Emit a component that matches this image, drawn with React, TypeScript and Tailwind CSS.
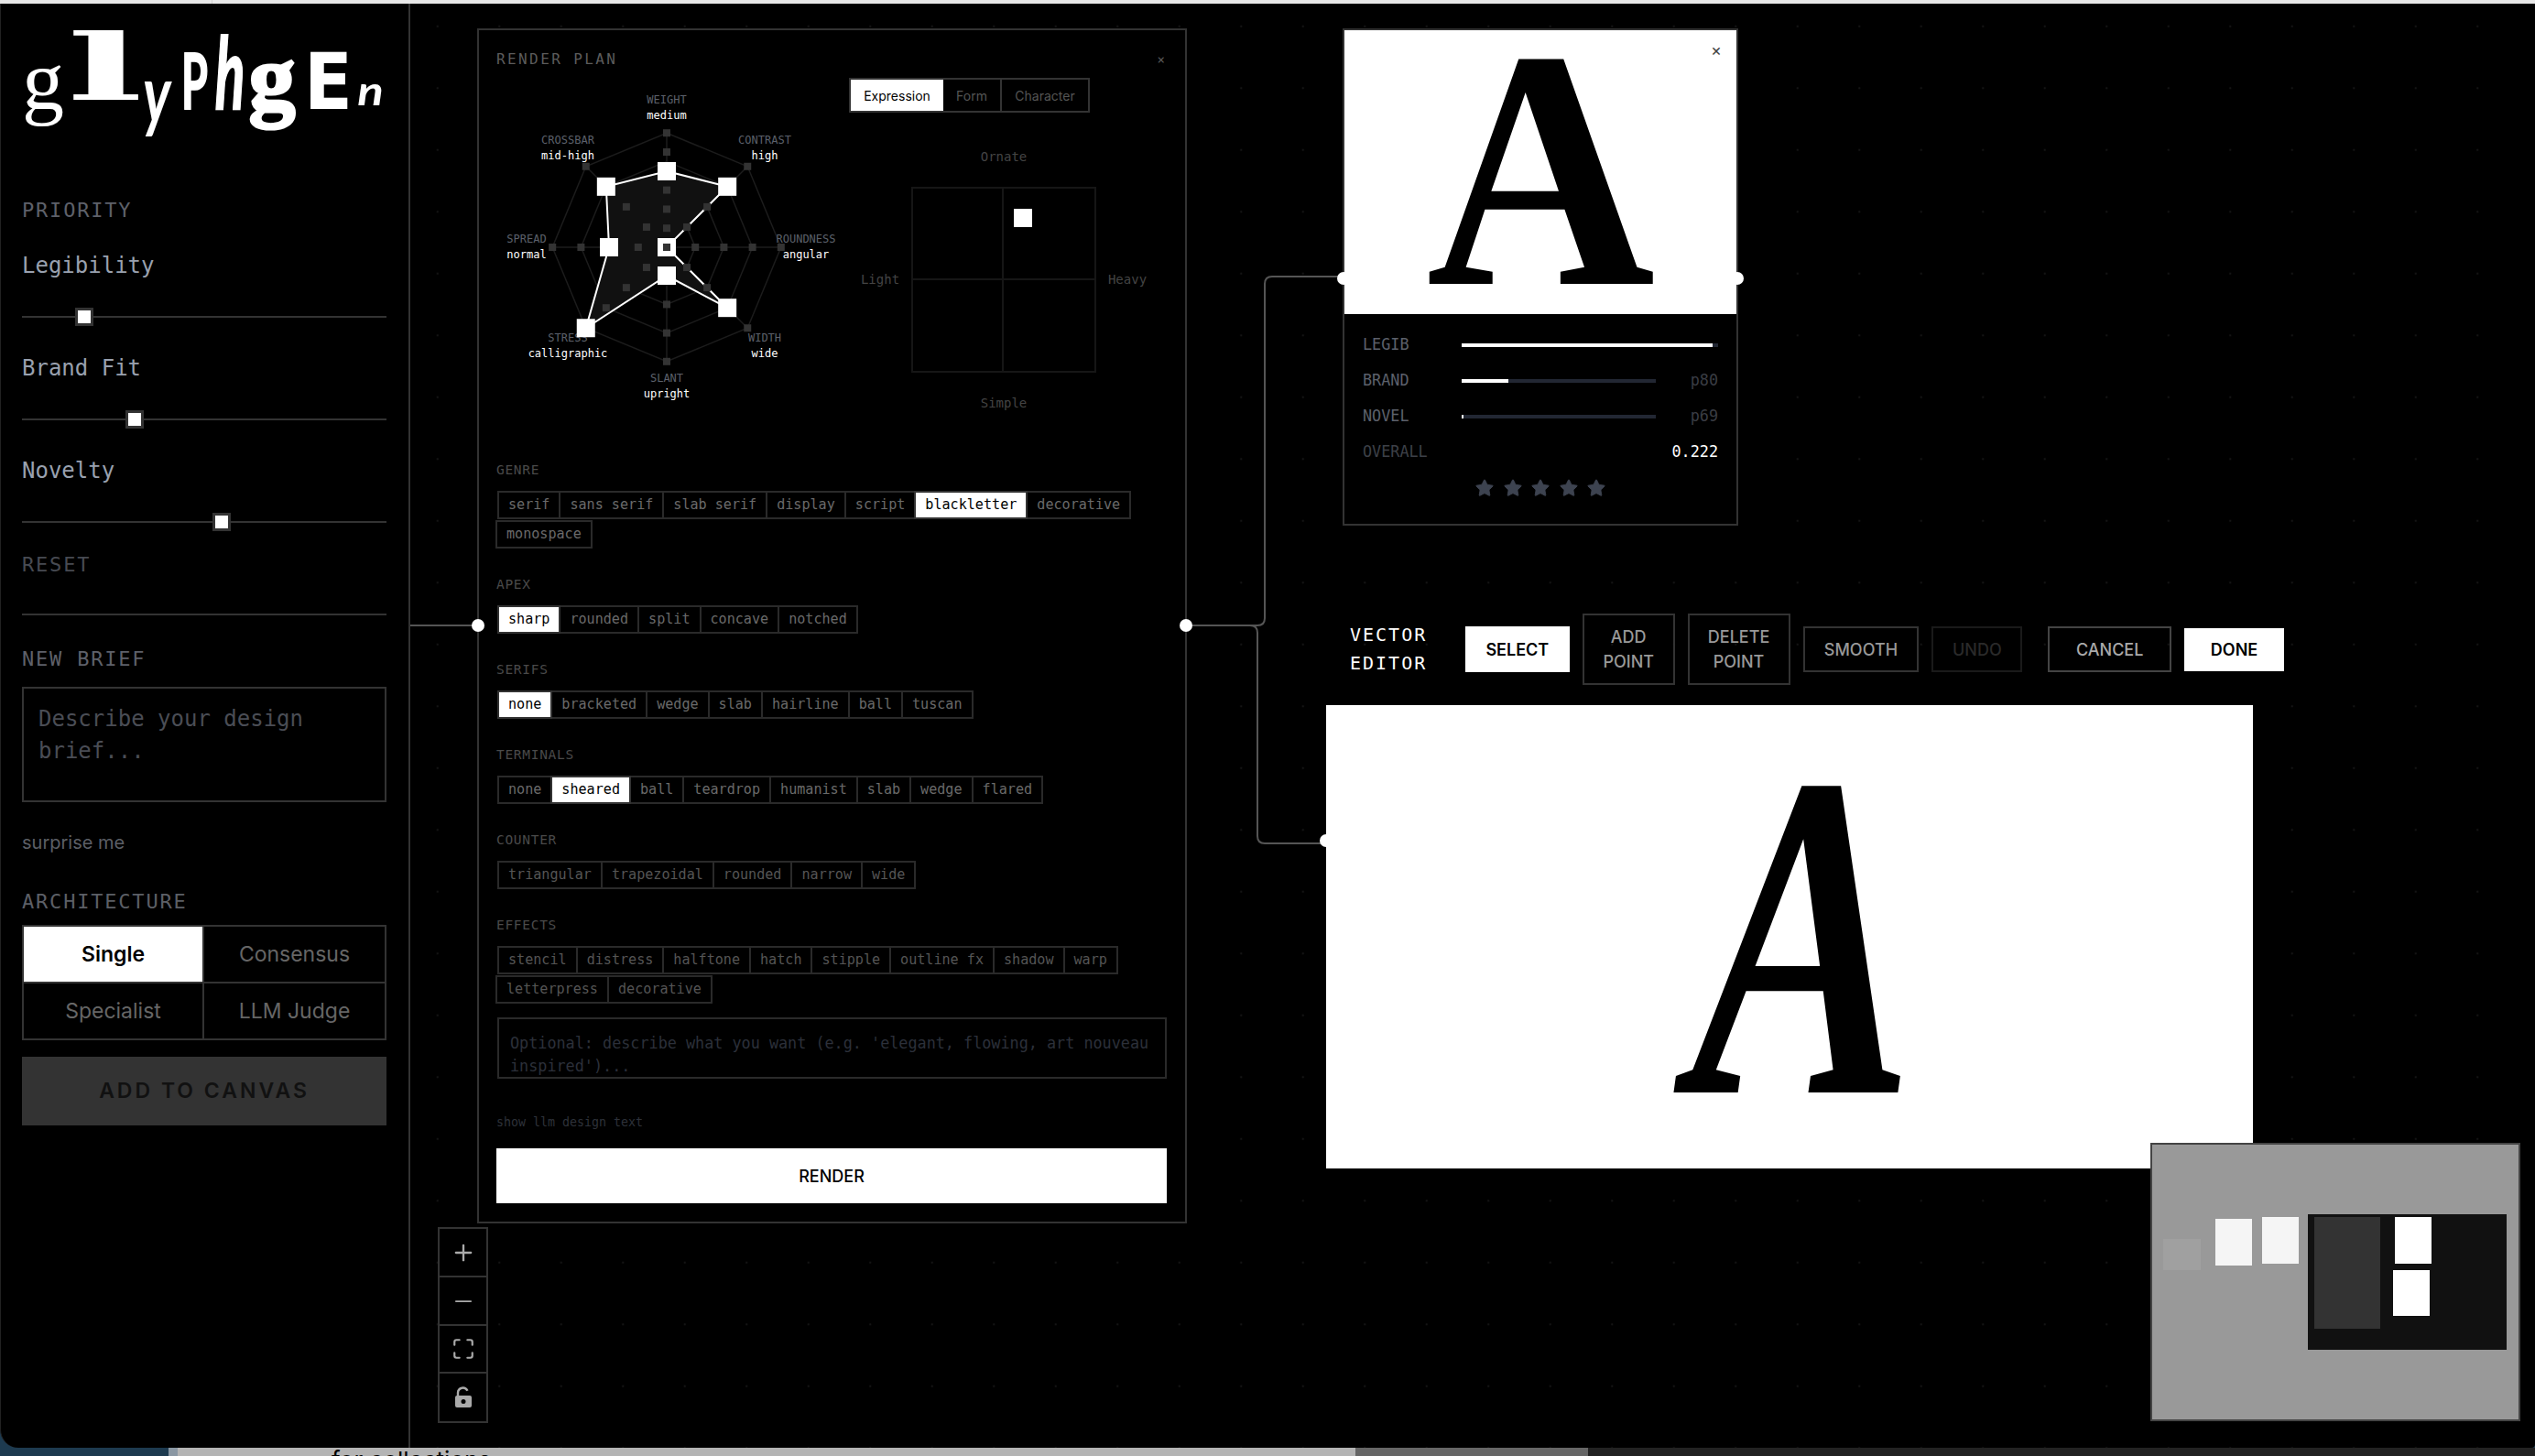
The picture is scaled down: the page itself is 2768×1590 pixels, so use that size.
import React from 'react';
import { Maximize, Minus, Plus, Star } from 'lucide-react';

const AXES = [
  { name: 'WEIGHT', value: 'medium', x: 186, y: 14, r: 83, ticks: [20.8, 41.6, 62.4, 83.2, 104, 124.8] },
  { name: 'CONTRAST', value: 'high', x: 293, y: 58, r: 93.6, ticks: [31.2, 62.4, 93.6, 124.8] },
  { name: 'ROUNDNESS', value: 'angular', x: 338, y: 166, r: 0, ticks: [31.2, 62.4, 93.6, 124.8] },
  { name: 'WIDTH', value: 'wide', x: 293, y: 274, r: 93.6, ticks: [31.2, 62.4, 93.6, 124.8] },
  { name: 'SLANT', value: 'upright', x: 186, y: 318, r: 31, ticks: [31.2, 62.4, 93.6, 124.8] },
  { name: 'STRESS', value: 'calligraphic', x: 78, y: 274, r: 124.8, ticks: [31.2, 62.4, 93.6, 124.8] },
  { name: 'SPREAD', value: 'normal', x: 33, y: 166, r: 63, ticks: [31.2, 62.4, 93.6, 124.8] },
  { name: 'CROSSBAR', value: 'mid-high', x: 78, y: 58, r: 93.6, ticks: [31.2, 62.4, 93.6, 124.8] },
];

const CX = 186;
const CY = 175;

const polar = (index: number, r: number) => {
  const a = ((-90 + 45 * index) * Math.PI) / 180;
  return [CX + r * Math.cos(a), CY + r * Math.sin(a)];
};

const ring = (r: number) => AXES.map((_, i) => polar(i, r).join(',')).join(' ');

function Radar() {
  return (
    <svg width="372" height="350" viewBox="0 0 372 350" className="mt-[10px] shrink-0">
      {[31.2, 62.4, 93.6, 124.8].map((r) => (
        <polygon key={r} points={ring(r)} fill="none" stroke="#1c1c1c" strokeWidth="1.5" />
      ))}
      {AXES.map((_, i) => {
        const [x, y] = polar(i, 124.8);
        return <line key={i} x1={CX} y1={CY} x2={x} y2={y} stroke="#1c1c1c" strokeWidth="1.5" />;
      })}
      <polygon points={AXES.map((a, i) => polar(i, a.r).join(',')).join(' ')} fill="#111111" stroke="none" />
      {AXES.map((a) => (
        <g key={a.name} textAnchor="middle" className="text-[12px]">
          <text x={a.x} y={a.y} dominantBaseline="central" className="fill-[#5c606b]">{a.name}</text>
          <text x={a.x} y={a.y + 17} dominantBaseline="central" className="fill-white">{a.value}</text>
        </g>
      ))}
      <polygon points={AXES.map((a, i) => polar(i, a.r).join(',')).join(' ')} fill="none" stroke="#ffffff" strokeWidth="2" />
      {AXES.map((a, i) =>
        a.ticks.map((t) => {
          const [x, y] = polar(i, t);
          return <rect key={`${a.name}${t}`} x={x - 4} y={y - 4} width="8" height="8" fill="#333333" />;
        }),
      )}
      {AXES.map((a, i) => {
        const [x, y] = polar(i, a.r);
        return <rect key={a.name} x={x - 10} y={y - 10} width="20" height="20" fill="#ffffff" />;
      })}
      <rect x={CX - 4} y={CY - 4} width="8" height="8" fill="#333333" />
    </svg>
  );
}

function Tags({ items, active, dim }: { items: string[]; active?: string; dim?: boolean }) {
  return (
    <div className="mt-[14px] ml-[1px] flex flex-wrap gap-y-[1px]">
      {items.map((item) => (
        <div
          key={item}
          className={
            item === active
              ? 'relative z-10 -ml-[2px] flex h-[31px] items-center border-2 border-[#333] bg-white px-[10px] text-[15.1px] text-black first:ml-0'
              : dim
                ? '-ml-[2px] flex h-[31px] items-center border-2 border-[#2a2a2a] px-[10px] text-[15.1px] text-[#555] first:ml-0'
                : '-ml-[2px] flex h-[31px] items-center border-2 border-[#2a2a2a] px-[10px] text-[15.1px] text-[#6a6a6a] first:ml-0'
          }
        >
          {item}
        </div>
      ))}
    </div>
  );
}

function Section({ title, first, children }: { title: string; first?: boolean; children: React.ReactNode }) {
  return (
    <div className={first ? 'mt-[55px]' : 'mt-[30px]'}>
      <div className="text-[14.5px] leading-[18px] tracking-[0.7px] text-[#4a4a4a]">{title}</div>
      {children}
    </div>
  );
}

function Slider({ label, thumb, first }: { label: string; thumb: string; first?: boolean }) {
  return (
    <>
      <div className={first ? 'mt-[33px] text-[24px] leading-[30px] text-gray-400' : 'mt-[31px] text-[24px] leading-[30px] text-gray-400'}>{label}</div>
      <div className="relative mt-[31px] flex h-[20px] items-center">
        <div className="h-[2px] w-full bg-[#333]" />
        <div className={`absolute top-0 h-[20px] w-[20px] border-[3px] border-[#333] bg-white ${thumb}`} />
      </div>
    </>
  );
}

function Metric({ label, fill, note }: { label: string; fill: string; note: string }) {
  return (
    <div className="flex h-[39px] items-center">
      <div className="w-[108px] text-[16.8px] text-[#5c606b]">{label}</div>
      <div className="h-[4px] w-[212px] bg-[#222733]">
        <div className={`h-full bg-white ${fill}`} />
      </div>
      <div className="ml-auto text-[16.8px] text-[#3a3d44]">{note}</div>
    </div>
  );
}

function ToolButton({ className, children }: { className: string; children: React.ReactNode }) {
  return (
    <div className={`flex items-center justify-center text-center font-['Inter',sans-serif] text-[18px] font-medium leading-[27px] ${className}`}>
      {children}
    </div>
  );
}

export default function App() {
  return (
    <div className="flex h-[1590px] w-[2768px] flex-col overflow-hidden bg-[#1d3a4f] font-['DejaVu_Sans_Mono',monospace]">
      <div className="h-[4px] shrink-0 bg-[#e8e8e8]">
        <div className="ml-[231px] h-full w-px bg-[#d0d0d0]" />
      </div>

      <div className="flex h-[1577px] shrink-0 overflow-hidden rounded-bl-[20px] rounded-br-[4px] border-l border-[#222] bg-black">
        {/* Sidebar */}
        <aside className="flex w-[447px] shrink-0 flex-col border-r-2 border-[#333] pr-[24px] pl-[23px]">
          <div className="flex h-[214px] items-baseline pt-[27px] text-white">
            <span className="w-[55px] font-['Liberation_Serif',serif] text-[92px] leading-[90px]">g</span>
            <span className="w-[71px] scale-x-[2.2] -translate-y-[10px] text-center font-['DejaVu_Serif',serif] text-[100px] leading-[90px] font-bold">l</span>
            <span className="w-[40px] scale-x-[0.7] translate-y-[15px] text-center font-['Lato',sans-serif] text-[88px] leading-[90px] font-bold italic">y</span>
            <span className="w-[36px] scale-x-[0.55] text-center font-['Lato',sans-serif] text-[85px] leading-[90px] font-bold [-webkit-text-stroke:2px_white]">P</span>
            <span className="w-[39px] scale-x-[0.55] text-center font-['Lato',sans-serif] text-[110px] leading-[90px] font-bold italic [-webkit-text-stroke:2px_white]">h</span>
            <span className="w-[64px] text-center font-['Liberation_Serif',serif] text-[102px] leading-[90px] font-bold [-webkit-text-stroke:3px_white]">g</span>
            <span className="w-[58px] scale-x-[0.9] text-center font-['DejaVu_Sans',sans-serif] text-[86px] leading-[90px] font-bold">E</span>
            <span className="w-[35px] -translate-y-[4px] scale-x-[1.2] text-center font-['Lato',sans-serif] text-[44px] leading-[90px] font-bold italic">n</span>
          </div>

          <div className="text-[22px] leading-[24px] tracking-[1.8px] text-[#5e616a]">PRIORITY</div>
          <Slider label="Legibility" thumb="left-[58px]" first />
          <Slider label="Brand Fit" thumb="left-[113px]" />
          <Slider label="Novelty" thumb="left-[208px]" />

          <div className="mt-[25px] text-[22px] leading-[24px] tracking-[1.8px] text-[#474a52]">RESET</div>
          <div className="mt-[41px] h-[2px] bg-[#333]" />

          <div className="mt-[36px] text-[22px] leading-[24px] tracking-[1.8px] text-[#5e616a]">NEW BRIEF</div>
          <div className="mt-[18px] h-[126px] border-2 border-[#333] px-[16px] pt-[16px] text-[24px] leading-[35px] text-[#4a4d55]">
            Describe your design brief...
          </div>

          <div className="mt-[32px] font-['Inter',sans-serif] text-[20px] leading-[24px] text-[#5c5f66]">surprise me</div>

          <div className="mt-[41px] text-[22px] leading-[24px] tracking-[1.8px] text-[#5c5f66]">ARCHITECTURE</div>
          <div className="mt-[13px] grid h-[126px] grid-cols-2 font-['Inter',sans-serif] text-[23px] text-[#666]">
            <div className="flex items-center justify-center border-2 border-[#333] bg-white font-semibold text-black">Single</div>
            <div className="-ml-[2px] flex items-center justify-center border-2 border-[#333]">Consensus</div>
            <div className="-mt-[2px] flex items-center justify-center border-2 border-[#333]">Specialist</div>
            <div className="-mt-[2px] -ml-[2px] flex items-center justify-center border-2 border-[#333]">LLM Judge</div>
          </div>
          <div className="mt-[18px] flex h-[75px] items-center justify-center bg-[#333] font-['Inter',sans-serif] text-[23px] font-semibold tracking-[3px] text-[#111]">
            ADD TO CANVAS
          </div>
        </aside>

        {/* Canvas */}
        <main className="relative flex-1 overflow-hidden bg-[radial-gradient(circle,#141414_1px,transparent_1.6px)] bg-size-[67.5px_67.5px] bg-position-[-4px_-9px]">
          <svg width="2320" height="1577" className="absolute top-0 left-0" fill="none" stroke="#555" strokeWidth="2">
            <path d="M0 679H73" />
            <path d="M848 679H925Q933 679 933 671V306Q933 298 941 298H1018" />
            <path d="M848 679H917Q925 679 925 687V909Q925 917 933 917H1000" />
          </svg>

          {/* Render plan */}
          <section className="absolute top-[27px] left-[73px] w-[775px] border-2 border-[#333] bg-black pr-[20px] pb-[20px] pl-[19px]">
            <div className="absolute top-[643px] -left-[8px] h-[14px] w-[14px] rounded-full bg-white" />
            <div className="absolute top-[643px] -right-[8px] h-[14px] w-[14px] rounded-full bg-white" />

            <div className="flex items-center justify-between pt-[22px] text-[16px] leading-[20px] text-[#5c5c5c]">
              <span className="tracking-[2.4px]">RENDER PLAN</span>
              <span className="mr-[2px] text-[14px]">×</span>
            </div>

            <div className="mt-[10px] flex">
              <Radar />
              <div className="ml-[13px]">
                <div className="flex h-[38px] w-[263px] border-2 border-[#333] font-['Inter',sans-serif] text-[14px] text-[#555]">
                  <div className="flex w-[101px] items-center justify-center bg-white text-black">Expression</div>
                  <div className="flex w-[64px] items-center justify-center border-r-2 border-[#333]">Form</div>
                  <div className="flex flex-1 items-center justify-center">Character</div>
                </div>
                <div className="mt-[39px] w-[338px] text-center text-[14px] leading-[18px] text-[#444]">Ornate</div>
                <div className="mt-[24px] flex w-[338px] items-center text-center text-[14px] text-[#444]">
                  <div className="w-[68px]">Light</div>
                  <div className="relative grid h-[203px] w-[202px] grid-cols-2 grid-rows-2 border-2 border-[#161616]">
                    <div className="border-r-2 border-b-2 border-[#161616]" />
                    <div className="border-b-2 border-[#161616]" />
                    <div className="border-r-2 border-[#161616]" />
                    <div />
                    <div className="absolute top-[22px] left-[110px] h-[20px] w-[20px] bg-white" />
                  </div>
                  <div className="w-[68px]">Heavy</div>
                </div>
                <div className="mt-[24px] w-[338px] text-center text-[14px] leading-[18px] text-[#444]">Simple</div>
              </div>
            </div>

            <Section title="GENRE" first>
              <Tags items={['serif', 'sans serif', 'slab serif', 'display', 'script', 'blackletter', 'decorative', 'monospace']} active="blackletter" />
            </Section>
            <Section title="APEX">
              <Tags items={['sharp', 'rounded', 'split', 'concave', 'notched']} active="sharp" />
            </Section>
            <Section title="SERIFS">
              <Tags items={['none', 'bracketed', 'wedge', 'slab', 'hairline', 'ball', 'tuscan']} active="none" />
            </Section>
            <Section title="TERMINALS">
              <Tags items={['none', 'sheared', 'ball', 'teardrop', 'humanist', 'slab', 'wedge', 'flared']} active="sheared" />
            </Section>
            <Section title="COUNTER">
              <Tags items={['triangular', 'trapezoidal', 'rounded', 'narrow', 'wide']} dim />
            </Section>
            <Section title="EFFECTS">
              <Tags items={['stencil', 'distress', 'halftone', 'hatch', 'stipple', 'outline fx', 'shadow', 'warp', 'letterpress', 'decorative']} dim />
            </Section>

            <div className="mt-[15px] ml-[1px] h-[67px] overflow-hidden border-2 border-[#2a2a2a] px-[12px] pt-[14px] text-[16.8px] leading-[25px] text-[#2c303a]">
              Optional: describe what you want (e.g. 'elegant, flowing, art nouveau inspired')...
            </div>
            <div className="mt-[39px] text-[13.3px] leading-[18px] text-[#2e323a]">show llm design text</div>
            <div className="mt-[19px] flex h-[60px] items-center justify-center bg-white font-['Inter',sans-serif] text-[18px] font-medium text-black">
              RENDER
            </div>
          </section>

          {/* Zoom controls */}
          <div className="absolute top-[1336px] left-[30px] flex w-[55px] flex-col border-2 border-[#333] text-[#aaa]">
            <div className="flex h-[53px] items-center justify-center border-b-2 border-[#333]"><Plus size={28} strokeWidth={2} /></div>
            <div className="flex h-[53px] items-center justify-center border-b-2 border-[#333]"><Minus size={28} strokeWidth={1.5} /></div>
            <div className="flex h-[52px] items-center justify-center border-b-2 border-[#333]"><Maximize size={26} strokeWidth={2} /></div>
            <div className="flex h-[52px] items-center justify-center">
              <svg width="20" height="24" viewBox="0 0 20 24" fill="currentColor">
                <path d="M4 10V7a5.5 5.5 0 0 1 10.5-2.2" fill="none" stroke="currentColor" strokeWidth="2.4" />
                <path fillRule="evenodd" d="M3 10h14a2 2 0 0 1 2 2v9a2 2 0 0 1-2 2H3a2 2 0 0 1-2-2v-9a2 2 0 0 1 2-2Zm7 4a2.5 2.5 0 1 0 0 5 2.5 2.5 0 0 0 0-5Z" />
              </svg>
            </div>
          </div>

          {/* Preview card */}
          <section className="absolute top-[27px] left-[1018px] w-[432px] border-2 border-[#333] bg-black">
            <div className="absolute top-[264px] -left-[8px] h-[14px] w-[14px] rounded-full bg-white" />
            <div className="absolute top-[264px] -right-[8px] h-[14px] w-[14px] rounded-full bg-white" />
            <div className="relative flex h-[310px] justify-center bg-white font-['Liberation_Serif',serif] text-[372px] leading-[303px] font-bold text-black">
              <span className="scale-x-[0.93]">A</span>
              <span className="absolute top-[10px] right-[16px] font-['Inter',sans-serif] text-[18px] leading-[24px] font-normal text-[#444]">×</span>
            </div>
            <div className="px-[20px] pt-[14px] pb-[28px]">
              <div className="flex h-[39px] items-center">
                <div className="w-[108px] text-[16.8px] text-[#5c606b]">LEGIB</div>
                <div className="h-[4px] flex-1 bg-[#222733]">
                  <div className="h-full w-[274px] bg-white" />
                </div>
              </div>
              <Metric label="BRAND" fill="w-[51px]" note="p80" />
              <Metric label="NOVEL" fill="w-[2px]" note="p69" />
              <div className="flex h-[39px] items-center justify-between text-[16.8px]">
                <span className="text-[#3d4048]">OVERALL</span>
                <span className="font-medium text-white">0.222</span>
              </div>
              <div className="mt-[9px] flex h-[22px] items-center justify-center gap-[8.5px] text-[#3d4350]">
                {[1, 2, 3, 4, 5].map((n) => (
                  <Star key={n} size={22} fill="currentColor" strokeWidth={1} />
                ))}
              </div>
            </div>
          </section>

          {/* Vector editor */}
          <section className="absolute top-[666px] left-[1000px] w-[1046px]">
            <div className="flex h-[78px] items-center gap-[14px] pl-[26px]">
              <div className="w-[112px] text-[20px] leading-[31px] tracking-[2px] text-white">
                VECTOR
                <br />
                EDITOR
              </div>
              <ToolButton className="h-[50px] w-[114px] bg-white font-semibold text-black">SELECT</ToolButton>
              <ToolButton className="h-[78px] w-[101px] border-2 border-[#333] text-[#999]">
                ADD
                <br />
                POINT
              </ToolButton>
              <ToolButton className="h-[78px] w-[112px] border-2 border-[#333] text-[#999]">
                DELETE
                <br />
                POINT
              </ToolButton>
              <ToolButton className="h-[50px] w-[127px] border-2 border-[#333] text-[#999]">SMOOTH</ToolButton>
              <ToolButton className="h-[50px] w-[99px] border-2 border-[#1a1a1a] text-[#2a2a2a]">UNDO</ToolButton>
              <ToolButton className="ml-[14px] h-[50px] w-[135px] border-2 border-[#444] text-[#aaa]">CANCEL</ToolButton>
              <ToolButton className="h-[47px] w-[109px] bg-white font-semibold text-black">DONE</ToolButton>
            </div>
            <div className="relative mt-[22px] flex h-[506px] w-[1012px] justify-center bg-white">
              <span className="translate-x-[14px] scale-x-[0.72] font-['Liberation_Serif',serif] text-[507px] leading-[504px] font-bold text-black italic">A</span>
            </div>
            <div className="absolute top-[241px] -left-[7px] h-[14px] w-[14px] rounded-full bg-white" />
          </section>

          {/* Minimap */}
          <div className="absolute top-[1244px] left-[1900px] h-[304px] w-[404px] border-2 border-[#444] bg-[#999]">
            <div className="absolute top-[103px] left-[12px] h-[34px] w-[41px] bg-[#a0a0a0]" />
            <div className="absolute top-[81px] left-[69px] h-[51px] w-[40px] bg-[#f5f5f5]" />
            <div className="absolute top-[79px] left-[120px] h-[51px] w-[40px] bg-[#f5f5f5]" />
            <div className="absolute top-[76px] left-[170px] h-[148px] w-[217px] bg-[#111]" />
            <div className="absolute top-[79px] left-[177px] h-[122px] w-[72px] bg-[#333]" />
            <div className="absolute top-[79px] left-[265px] h-[51px] w-[40px] bg-white" />
            <div className="absolute top-[137px] left-[263px] h-[50px] w-[40px] bg-white" />
          </div>
        </main>
      </div>

      {/* Window behind */}
      <div className="flex h-[9px] shrink-0 overflow-hidden bg-[#222]">
        <div className="w-[184px] bg-[#1d3a4f]" />
        <div className="w-[10px] bg-[#8a97a3]" />
        <div className="w-[1286px] bg-[#b4b4b4] pt-[2px] pl-[168px] font-['Inter',sans-serif] text-[26px] leading-[24px] text-black">
          for collections
        </div>
        <div className="w-[254px] bg-[#666]" />
      </div>
    </div>
  );
}
